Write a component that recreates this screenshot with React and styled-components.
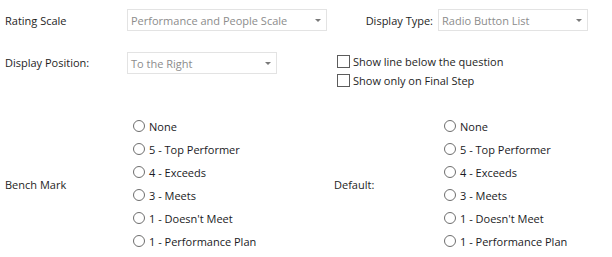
import React from 'react';
import styled, { createGlobalStyle } from 'styled-components';

const Global = createGlobalStyle`
  html, body { margin: 0; padding: 0; background: #fff; }
  body {
    font-family: "Open Sans", "Noto Sans", sans-serif;
    font-size: 11px;
    color: #222;
  }
`;

const Form = styled.div`
  display: grid;
  grid-template-columns: 122px 207px 104px 1fr;
  grid-template-rows: 22px 42px auto;
  row-gap: 21px;
  padding: 9px 0 0 5px;
  width: 612px;
  box-sizing: border-box;
`;

const Label = styled.div`
  display: flex;
  align-items: center;
  align-self: ${p => (p.$top ? 'start' : 'stretch')};
  justify-content: ${p => (p.$right ? 'flex-end' : 'flex-start')};
  padding-right: ${p => (p.$right ? '5px' : '0')};
  height: ${p => (p.$top ? '21px' : 'auto')};
  color: #1e1e1e;
  white-space: nowrap;
`;

const Select = styled.div`
  position: relative;
  box-sizing: border-box;
  width: ${p => p.$w}px;
  height: 22px;
  border: 1px solid #e3e3e3;
  background: #fff;
  display: flex;
  align-items: center;
  padding-left: 3px;
  color: #8c8c8c;
  white-space: nowrap;
`;

const Arrow = styled.span`
  position: absolute;
  right: 5px;
  top: 9px;
  width: 0;
  height: 0;
  border-left: 3px solid transparent;
  border-right: 3px solid transparent;
  border-top: 3px solid #7a7a7a;
`;

const Checks = styled.div`
  grid-column: 3 / 5;
  display: flex;
  flex-direction: column;
  gap: 5px;
  padding: 2px 0 0 3px;
`;

const CheckRow = styled.label`
  display: flex;
  align-items: center;
  gap: 3px;
  height: 14px;
  color: #1e1e1e;
`;

const Box = styled.span`
  box-sizing: border-box;
  width: 13px;
  height: 13px;
  border: 1px solid #5c5c5c;
  background: #fff;
  flex: none;
`;

const RadioList = styled.div`
  display: flex;
  flex-direction: column;
  padding-left: 6px;
`;

const RadioRow = styled.label`
  display: flex;
  align-items: center;
  gap: 4px;
  height: 23px;
  color: #1a1a24;
`;

const Circle = styled.span`
  box-sizing: border-box;
  width: 12px;
  height: 12px;
  border-radius: 50%;
  border: 1px solid #6e6e6e;
  background: #fff;
  flex: none;
  margin-top: -2px;
`;

const options = [
  'None',
  '5 - Top Performer',
  '4 - Exceeds',
  '3 - Meets',
  "1 - Doesn't Meet",
  '1 - Performance Plan',
];

const Radios = () => (
  <RadioList>
    {options.map(o => (
      <RadioRow key={o}>
        <Circle />
        {o}
      </RadioRow>
    ))}
  </RadioList>
);

export default function App() {
  return (
    <>
      <Global />
      <Form>
        <Label>Rating Scale</Label>
        <Select $w={200}>Performance and People Scale<Arrow /></Select>
        <Label $right>Display Type:</Label>
        <Select $w={150}>Radio Button List<Arrow /></Select>

        <Label $top>Display Position:</Label>
        <Select $w={150}>To the Right<Arrow /></Select>
        <Checks>
          <CheckRow><Box />Show line below the question</CheckRow>
          <CheckRow><Box />Show only on Final Step</CheckRow>
        </Checks>

        <Label>Bench Mark</Label>
        <Radios />
        <Label>Default:</Label>
        <Radios />
      </Form>
    </>
  );
}
